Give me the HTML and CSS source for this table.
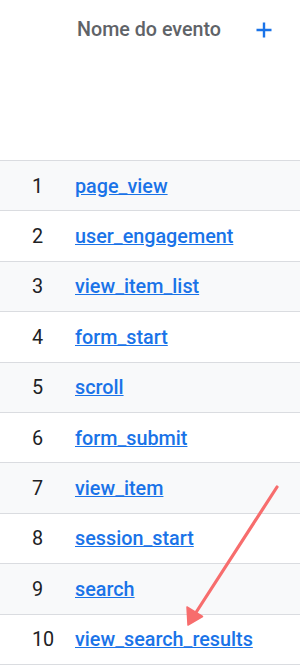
FILE: index.html
```html
<!DOCTYPE html>
<html lang="pt">
<head>
<meta charset="utf-8">
<link rel="stylesheet" href="styles.css">
</head>
<body>
<div class="table">
  <div class="header">
    <span class="title">Nome do evento</span>
    <svg class="plus" width="16" height="16" viewBox="0 0 16 16"><path d="M8 0.5V15.5M0.5 8H15.5" stroke="#1a73e8" stroke-width="2.4" fill="none"/></svg>
  </div>
  <div class="row odd"><span class="num">1</span><a href="#">page_view</a></div>
  <div class="row"><span class="num">2</span><a href="#">user_engagement</a></div>
  <div class="row odd"><span class="num">3</span><a href="#">view_item_list</a></div>
  <div class="row"><span class="num">4</span><a href="#">form_start</a></div>
  <div class="row odd"><span class="num">5</span><a href="#">scroll</a></div>
  <div class="row"><span class="num">6</span><a href="#">form_submit</a></div>
  <div class="row odd"><span class="num">7</span><a href="#">view_item</a></div>
  <div class="row"><span class="num">8</span><a href="#">session_start</a></div>
  <div class="row odd"><span class="num">9</span><a href="#">search</a></div>
  <div class="row"><span class="num">10</span><a href="#">view_search_results</a></div>
  <svg class="arrow" width="300" height="665" viewBox="0 0 300 665">
    <line x1="277" y1="487" x2="195" y2="614" stroke="#f76d6d" stroke-width="3.2" stroke-linecap="round"/>
    <path d="M188 625 L187 607 L202.5 616.5 Z" fill="#f76d6d" stroke="#f76d6d" stroke-width="1.5" stroke-linejoin="round"/>
  </svg>
</div>
</body>
</html>
```
FILE: styles.css
```css
html, body {
  margin: 0;
  padding: 0;
  background: #fff;
}
body {
  font-family: Roboto, "Liberation Sans", sans-serif;
  width: 300px;
  height: 665px;
  overflow: hidden;
}
.table {
  position: relative;
}
.header {
  height: 161px;
  box-sizing: border-box;
  border-bottom: 1px solid #dadce0;
  display: flex;
  align-items: flex-start;
  padding-top: 18px;
  padding-left: 77px;
}
.title {
  font-size: 19.7px;
  font-weight: 500;
  color: #5f6368;
  line-height: 24px;
}
.plus {
  margin-left: 35px;
  margin-top: 4px;
}
.row {
  height: 50.4px;
  box-sizing: border-box;
  border-bottom: 1px solid #dadce0;
  display: flex;
  align-items: center;
  background: #fff;
  font-size: 19.8px;
  padding-top: 1px;
}
.row.odd {
  background: #f8f9fa;
}
.num {
  width: 43px;
  padding-left: 32px;
  color: #202124;
}
.row a {
  color: #1a73e8;
  text-decoration: underline;
  font-weight: 500;
}
.arrow {
  position: absolute;
  left: 0;
  top: 0;
  pointer-events: none;
}
```
